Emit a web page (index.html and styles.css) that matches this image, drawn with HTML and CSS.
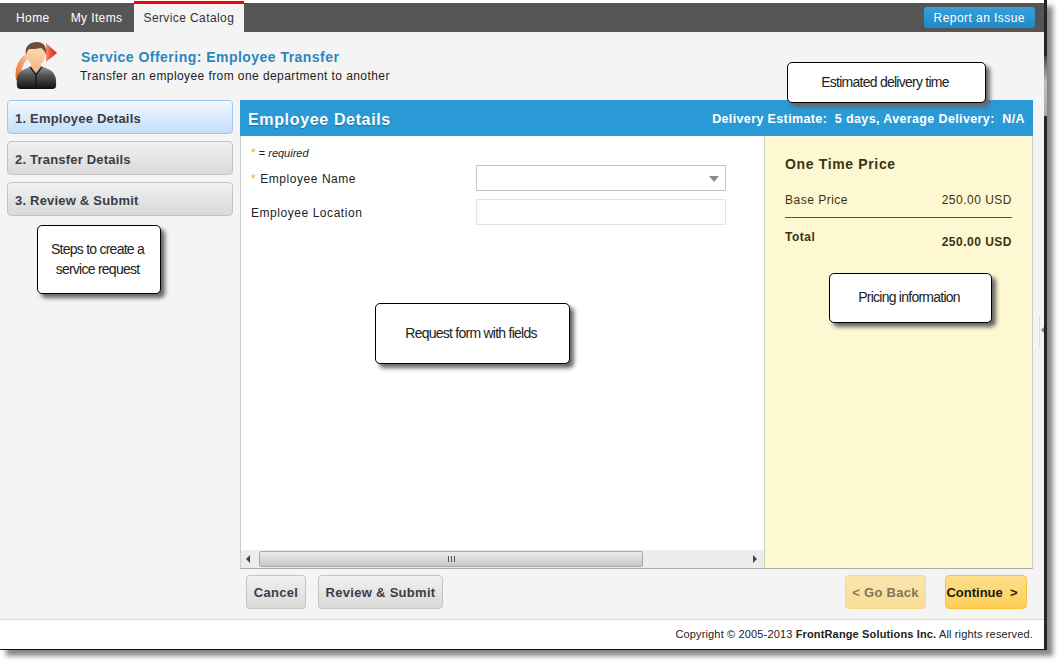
FILE: index.html
```html
<!DOCTYPE html>
<html lang="en">
<head>
<meta charset="UTF-8">
<meta name="viewport" content="width=device-width, initial-scale=1.0">
<title>Service Catalog</title>
<link rel="stylesheet" href="styles.css">
</head>
<body>
<div class="app">
  <div class="topbar">
    <a class="tab">Home</a>
    <a class="tab tab-items">My Items</a>
    <a class="tab tab-active">Service Catalog</a>
    <a class="report-btn">Report an Issue</a>
  </div>

  <div class="offering">
    <svg class="offering-icon" width="46" height="50" viewBox="0 0 46 50">
      <defs>
        <linearGradient id="bodyGrad" x1="0" y1="0" x2="0" y2="1">
          <stop offset="0" stop-color="#9a9a9a"/>
          <stop offset="0.4" stop-color="#555"/>
          <stop offset="1" stop-color="#111"/>
        </linearGradient>
        <linearGradient id="faceGrad" x1="0" y1="0" x2="0" y2="1">
          <stop offset="0" stop-color="#fde3c0"/>
          <stop offset="1" stop-color="#f4bd88"/>
        </linearGradient>
        <linearGradient id="arcGrad" x1="0" y1="1" x2="1" y2="0">
          <stop offset="0" stop-color="#e66a18"/>
          <stop offset="1" stop-color="#f9d2b0"/>
        </linearGradient>
        <linearGradient id="arrowGrad" x1="0" y1="0" x2="1" y2="0">
          <stop offset="0" stop-color="#f4907c"/>
          <stop offset="0.5" stop-color="#ea4630"/>
          <stop offset="1" stop-color="#e02b1a"/>
        </linearGradient>
      </defs>
      <path d="M2 38 C0 26 5 15 14 11 L15 16 C10 20 7 26 6 38 Z" fill="url(#arcGrad)"/>
      <path d="M32 1 L43 11 L32 20 Z" fill="url(#arrowGrad)"/>
      <path d="M3 44 C2 35 4 29 11 27 L17 24 L27 24 L34 27 C40 29 43 35 42 44 Q42 47 38 47 L7 47 Q3 47 3 44 Z" fill="url(#bodyGrad)"/>
      <path d="M17 24 L22 31 L27 24 L26 20 L18 20 Z" fill="#f4bd88"/>
      <path d="M16 25 L22 33 L22 47 M28 25 L22 33" stroke="#111" stroke-width="1.2" fill="none"/>
      <ellipse cx="22" cy="12" rx="9" ry="12" fill="url(#faceGrad)"/>
      <path d="M12 13 C10 4 16 0 23 0 C30 0 33 5 32 13 C31 9 29 7 27 6 C23 7 18 7 15 7 C14 8 13 10 12 13 Z" fill="#6f4e38"/>
    </svg>
    <div class="offering-text">
      <h1 class="offering-title">Service Offering: Employee Transfer</h1>
      <p class="offering-desc">Transfer an employee from one department to another</p>
    </div>
  </div>

  <div class="main">
    <div class="steps">
      <div class="step step-active">1. Employee Details</div>
      <div class="step">2. Transfer Details</div>
      <div class="step">3. Review &amp; Submit</div>
    </div>

    <div class="content">
      <div class="panel">
        <div class="panel-head">
          <h2 class="panel-title">Employee Details</h2>
          <span class="panel-estimate">Delivery Estimate:&nbsp; 5 days, Average Delivery:&nbsp; N/A</span>
        </div>
        <div class="panel-body">
          <div class="form-col">
            <div class="form-area">
              <div class="required-note"><span class="star">*</span> = <em>required</em></div>
              <div class="field">
                <label class="field-label"><span class="star star-label">*</span>Employee Name</label>
                <div class="combo"><span class="combo-arrow"></span></div>
              </div>
              <div class="field">
                <label class="field-label">Employee Location</label>
                <input class="text-input" type="text">
              </div>
            </div>
            <div class="hscroll">
              <span class="hscroll-arrow hscroll-left"></span>
              <div class="hscroll-thumb"><span class="grip"></span></div>
              <span class="hscroll-arrow hscroll-right"></span>
            </div>
          </div>
          <div class="price-col">
            <h3 class="price-title">One Time Price</h3>
            <div class="price-row">
              <span>Base Price</span><span>250.00 USD</span>
            </div>
            <div class="price-row price-total">
              <span class="total-label">Total</span><span class="total-value">250.00 USD</span>
            </div>
          </div>
        </div>
      </div>

      <div class="actions">
        <button class="btn btn-cancel" type="button">Cancel</button>
        <button class="btn" type="button">Review &amp; Submit</button>
        <button class="btn btn-back" type="button">&lt; Go Back</button>
        <button class="btn btn-continue" type="button">Continue&nbsp; &gt;</button>
      </div>
    </div>
  </div>

  <div class="footer">Copyright &copy; 2005-2013 <strong>FrontRange Solutions Inc.</strong> All rights reserved.</div>

  <div class="collapse-handle"></div>
  <div class="page-thumb"></div>
</div>

<div class="callout callout-delivery">Estimated delivery time</div>
<div class="callout callout-steps">Steps to create a<br>service request</div>
<div class="callout callout-form">Request form with fields</div>
<div class="callout callout-pricing">Pricing information</div>
</body>
</html>
```

FILE: styles.css
```css
body {
  margin: 0;
  min-height: 665px;
  background-color: #fff;
  font-family: "Liberation Sans", Arial, sans-serif;
  color: #222;
  overflow: hidden;
}

.app {
  position: relative;
  display: flex;
  flex-direction: column;
  box-sizing: content-box;
  width: 1044px;
  height: 649px;
  background-color: #f4f4f4;
  border-right: 3px solid #23262a;
  border-bottom: 1px solid #111;
  box-shadow: 6px 6px 5px #888;
}

/* top navigation */
.topbar {
  display: flex;
  align-items: flex-end;
  height: 29px;
  margin-top: 3px;
  padding-left: 6px;
  padding-right: 9px;
  background-color: #555;
}

.app::before {
  content: "";
  position: absolute;
  top: 0;
  left: 0;
  right: 0;
  height: 3px;
  background-color: #fff;
}

.tab {
  display: block;
  height: 29px;
  padding: 0 10px;
  line-height: 30px;
  font-size: 12px;
  letter-spacing: 0.4px;
  color: #fff;
}

.tab-items {
  padding: 0 11px;
}

.tab-active {
  position: relative;
  z-index: 1;
  height: 28px;
  line-height: 28px;
  border-top: 3px solid #f00;
  background-color: #f4f4f4;
  color: #333;
}

.report-btn {
  margin-left: auto;
  margin-bottom: 4px;
  padding: 0 10px;
  height: 21px;
  line-height: 22px;
  font-size: 12px;
  letter-spacing: 0.45px;
  color: #fff;
  background: linear-gradient(#36a0dc, #2288c4);
  border-radius: 3px;
}

/* offering header */
.offering {
  display: flex;
  height: 68px;
  box-sizing: border-box;
  padding: 10px 0 0 14px;
}

.offering-icon {
  flex: none;
}

.offering-text {
  margin-left: 20px;
  padding-top: 7px;
}

.offering-title {
  margin: 0 0 0 1px;
  font-size: 14px;
  line-height: 16px;
  letter-spacing: 0.47px;
  color: #2a86c0;
}

.offering-desc {
  margin: 4px 0 0;
  font-size: 12px;
  line-height: 14px;
  letter-spacing: 0.42px;
  color: #222;
}

/* main area */
.main {
  display: flex;
  flex: 1;
  min-height: 0;
  padding-left: 7px;
}

.steps {
  display: flex;
  flex-direction: column;
  gap: 7px;
  flex: none;
  width: 226px;
}

.step {
  box-sizing: border-box;
  height: 34px;
  padding-left: 7px;
  line-height: 35px;
  font-size: 13px;
  font-weight: bold;
  letter-spacing: 0.2px;
  color: #3c3c46;
  background: linear-gradient(#f1f1f1, #d9d9d9);
  border: 1px solid #c4c4c4;
  border-radius: 4px;
}

.step-active {
  background: linear-gradient(#f3f9ff, #c4def8);
  border-color: #9cc8f0;
}

.content {
  display: flex;
  flex-direction: column;
  flex: none;
  width: 793px;
  margin-left: 7px;
}

.panel {
  display: flex;
  flex-direction: column;
  height: 469px;
}

.panel-head {
  display: flex;
  align-items: center;
  justify-content: space-between;
  flex: none;
  box-sizing: border-box;
  height: 36px;
  padding: 2px 8px 0;
  background-color: #2a9ad7;
  color: #fff;
}

.panel-title {
  margin: 1px 0 0;
  font-size: 16px;
  letter-spacing: 0.65px;
  text-shadow: 0 1px 1px rgba(0, 0, 0, 0.3);
}

.panel-estimate {
  font-size: 12.5px;
  font-weight: bold;
  letter-spacing: 0.37px;
}

.panel-body {
  display: flex;
  flex: 1;
  min-height: 0;
  border-left: 1px solid #ccc;
  border-right: 1px solid #ccc;
  border-bottom: 1px solid #aaa;
}

/* form */
.form-col {
  display: flex;
  flex-direction: column;
  flex: none;
  width: 523px;
  background-color: #fff;
}

.form-area {
  flex: 1;
  padding: 10px 0 0 10px;
}

.star {
  color: #f7ac2c;
  font-size: 12px;
}

.required-note {
  height: 19px;
  font-size: 11px;
  line-height: 14px;
  color: #222;
}

.field {
  display: flex;
  align-items: center;
  height: 26px;
  margin-bottom: 8px;
}

.field-label {
  display: block;
  width: 225px;
  padding-top: 1px;
  font-size: 12px;
  letter-spacing: 0.55px;
  color: #222;
}

.star-label {
  margin-right: 4px;
}

.combo {
  position: relative;
  box-sizing: border-box;
  width: 250px;
  height: 26px;
  background-color: #fff;
  border: 1px solid #c4c4c4;
}

.combo-arrow {
  position: absolute;
  top: 10px;
  right: 6px;
  border-left: 5px solid transparent;
  border-right: 5px solid transparent;
  border-top: 6px solid #8c8c8c;
}

.text-input {
  box-sizing: border-box;
  width: 250px;
  height: 26px;
  padding: 0;
  background-color: #fff;
  border: 1px solid #e4e4e4;
}

.hscroll {
  display: flex;
  align-items: center;
  flex: none;
  height: 18px;
  background-color: #ececec;
}

.hscroll-arrow {
  flex: none;
  width: 0;
  height: 0;
  border-top: 4px solid transparent;
  border-bottom: 4px solid transparent;
}

.hscroll-left {
  margin-left: 5px;
  border-right: 4px solid #444;
}

.hscroll-right {
  margin-left: 110px;
  border-left: 4px solid #444;
}

.hscroll-thumb {
  display: flex;
  align-items: center;
  justify-content: center;
  box-sizing: border-box;
  width: 384px;
  height: 16px;
  margin-left: 9px;
  background: linear-gradient(#ececec, #c6c6c6);
  border: 1px solid #a8a8a8;
  border-radius: 2px;
}

.grip {
  width: 7px;
  height: 6px;
  background: repeating-linear-gradient(90deg, #555 0, #555 1px, transparent 1px, transparent 3px);
}

/* pricing */
.price-col {
  flex: 1;
  box-sizing: border-box;
  padding: 20px 20px 0;
  background-color: #fef8d2;
  border-left: 1px solid #d4d4c4;
  color: #3a3414;
}

.price-title {
  margin: 0;
  font-size: 14px;
  line-height: 16px;
  letter-spacing: 0.65px;
}

.price-row {
  display: flex;
  justify-content: space-between;
  margin-top: 21px;
  padding-bottom: 10px;
  font-size: 12px;
  line-height: 14px;
  letter-spacing: 0.5px;
  border-bottom: 1px solid #5a5230;
}

.price-total {
  margin-top: 12px;
  border-bottom: none;
  font-weight: bold;
}

.total-value {
  margin-top: 5px;
}

/* bottom buttons */
.actions {
  display: flex;
  height: 34px;
  margin-top: 6px;
  padding-left: 6px;
}

.btn {
  box-sizing: border-box;
  height: 34px;
  width: 125px;
  padding: 0;
  font-family: inherit;
  font-size: 13px;
  font-weight: bold;
  letter-spacing: 0.3px;
  white-space: nowrap;
  color: #3c3c46;
  background: linear-gradient(#f1f1f1, #d9d9d9);
  border: 1px solid #c4c4c4;
  border-radius: 4px;
}

.btn-cancel {
  width: 60px;
  margin-right: 12px;
}

.btn-back {
  width: 81px;
  margin-left: 402px;
  color: #7d7660;
  background: linear-gradient(#fbe6ae, #f9dd97);
  border-color: #f5d98c;
}

.btn-continue {
  width: 82px;
  margin-left: 19px;
  padding-right: 8px;
  letter-spacing: 0;
  color: #1d1a0e;
  background: linear-gradient(#fddf8e, #fdcf55);
  border-color: #f6c33c;
}

.footer {
  box-sizing: border-box;
  height: 30px;
  margin-top: auto;
  padding-right: 11px;
  line-height: 29px;
  text-align: right;
  font-size: 11px;
  letter-spacing: 0.15px;
  color: #222;
  background-color: #fff;
  border-top: 1px solid #ddd;
}

.collapse-handle {
  position: absolute;
  top: 316px;
  right: -1px;
  width: 5px;
  height: 30px;
  border-left: 1px solid #ddd;
}

.collapse-handle::after {
  content: "";
  position: absolute;
  top: 11px;
  left: 1px;
  border-top: 3px solid transparent;
  border-bottom: 3px solid transparent;
  border-right: 3px solid #888;
}

.page-thumb {
  position: absolute;
  top: 56px;
  right: -3px;
  width: 3px;
  height: 60px;
  background: linear-gradient(#444, #c0c0c0 45%, #aaa);
}

/* annotation callouts drawn over the screenshot */
.callout {
  position: absolute;
  display: flex;
  align-items: center;
  justify-content: center;
  box-sizing: border-box;
  padding: 0 3px 2px 0;
  text-align: center;
  font-size: 14px;
  line-height: 20px;
  letter-spacing: -0.75px;
  color: #222;
  background-color: #fff;
  border: 1.5px solid #000;
  border-radius: 5px;
  box-shadow: 4px 4px 4px #666;
}

.callout-delivery {
  left: 787px;
  top: 62px;
  width: 199px;
  height: 41px;
}

.callout-steps {
  left: 37px;
  top: 225px;
  width: 124px;
  height: 69px;
}

.callout-form {
  left: 375px;
  top: 303px;
  width: 195px;
  height: 61px;
}

.callout-pricing {
  left: 829px;
  top: 273px;
  width: 163px;
  height: 50px;
}
```
